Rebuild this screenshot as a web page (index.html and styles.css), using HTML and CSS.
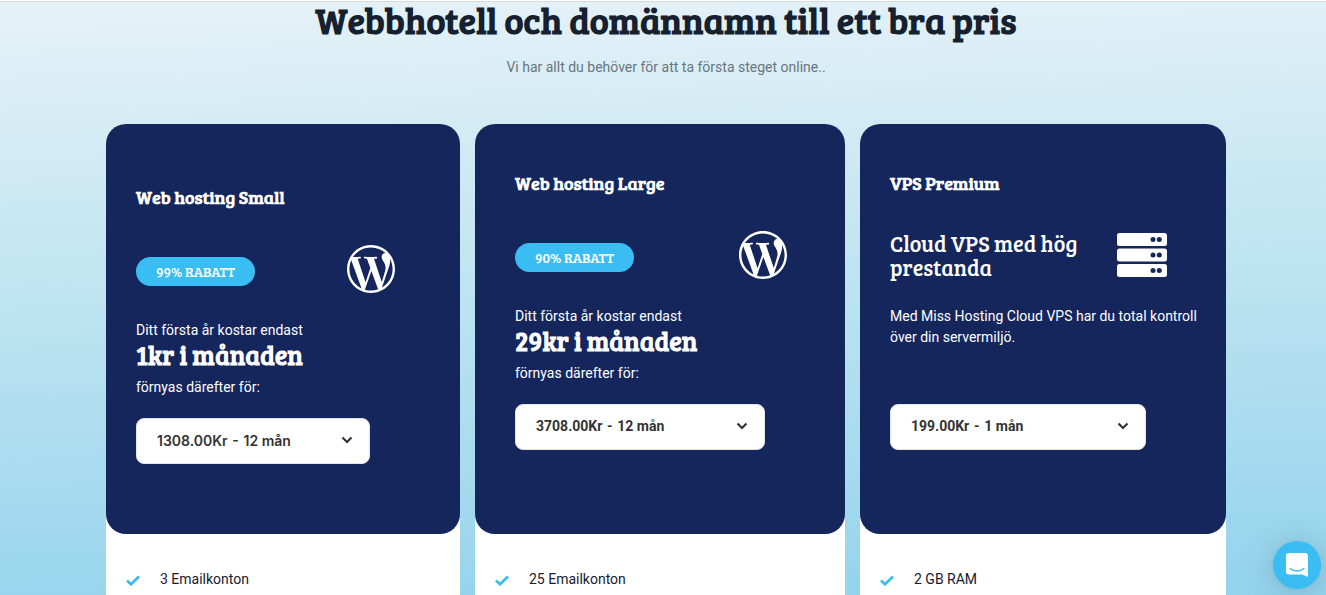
FILE: index.html
```html
<!doctype html>
<html lang="sv">
  <head>
    <meta charset="utf-8">
    <meta name="viewport" content="width=device-width, initial-scale=1.0">
    <title>Webbhotell och domännamn</title>
    <link rel="stylesheet" href="styles.css">
  </head>
  <body>
    <!-- shared icons -->
    <svg class="sprite" aria-hidden="true">
      <symbol id="wordpress" viewBox="0 0 24 24">
        <path d="M21.469 6.825c.84 1.537 1.318 3.3 1.318 5.175 0 3.979-2.156 7.456-5.363 9.325l3.295-9.527c.615-1.54.82-2.771.82-3.864 0-.405-.026-.78-.07-1.11m-7.981.105c.647-.03 1.232-.105 1.232-.105.582-.075.514-.93-.067-.899 0 0-1.755.135-2.88.135-1.064 0-2.85-.15-2.85-.15-.585-.03-.661.855-.075.885 0 0 .54.061 1.125.09l1.68 4.605-2.37 7.08L5.354 6.9c.649-.03 1.234-.1 1.234-.1.585-.075.516-.93-.065-.896 0 0-1.746.138-2.874.138-.2 0-.438-.008-.69-.015C4.911 3.15 8.235 1.215 12 1.215c2.809 0 5.365 1.072 7.286 2.833-.046-.003-.091-.009-.141-.009-1.06 0-1.812.923-1.812 1.914 0 .89.513 1.643 1.06 2.531.411.72.89 1.643.89 2.977 0 .915-.354 1.994-.821 3.479l-1.075 3.585-3.9-11.61.001.014zM12 22.784c-1.059 0-2.081-.153-3.048-.437l3.237-9.406 3.315 9.087c.024.053.05.101.078.149-1.12.393-2.325.609-3.582.609M1.211 12c0-1.564.336-3.05.935-4.39L7.29 21.709C3.694 19.96 1.212 16.271 1.211 12M12 0C5.385 0 0 5.385 0 12s5.385 12 12 12 12-5.385 12-12S18.615 0 12 0"/>
      </symbol>
      <symbol id="chevron" viewBox="0 0 12 8">
        <path d="M1.5 1.5 6 6l4.500-4.500" fill="none" stroke="#333" stroke-width="2.200"/>
      </symbol>
      <symbol id="check" viewBox="0 0 14 12">
        <path d="M1 6.500 5 10.200 13 2.500" fill="none" stroke="#39bdf2" stroke-width="2.800"/>
      </symbol>
    </svg>

    <main class="pricing">
      <header class="intro">
        <h1>Webbhotell och domännamn till ett bra pris</h1>
        <p>Vi har allt du behöver för att ta första steget online..</p>
      </header>

      <div class="cards">

        <article class="card card-small">
          <div class="card-head">
            <h2>Web hosting Small</h2>
            <div class="offer">
              <span class="badge">99% RABATT</span>
              <svg class="icon"><use href="#wordpress"/></svg>
            </div>
            <div class="details">
              <p>Ditt första år kostar endast</p>
              <p class="price">1kr i månaden</p>
              <p>förnyas därefter för:</p>
            </div>
            <div class="period">
              <select aria-label="Period för Web hosting Small">
                <option>1308.00Kr&emsp13;-&emsp13;12 mån</option>
              </select>
              <svg class="chevron"><use href="#chevron"/></svg>
            </div>
          </div>
          <ul class="features">
            <li><svg class="check"><use href="#check"/></svg>3 Emailkonton</li>
          </ul>
        </article>

        <article class="card card-large">
          <div class="card-head">
            <h2>Web hosting Large</h2>
            <div class="offer">
              <span class="badge">90% RABATT</span>
              <svg class="icon"><use href="#wordpress"/></svg>
            </div>
            <div class="details">
              <p>Ditt första år kostar endast</p>
              <p class="price">29kr i månaden</p>
              <p>förnyas därefter för:</p>
            </div>
            <div class="period">
              <select aria-label="Period för Web hosting Large">
                <option>3708.00Kr&emsp13;-&emsp13;12 mån</option>
              </select>
              <svg class="chevron"><use href="#chevron"/></svg>
            </div>
          </div>
          <ul class="features">
            <li><svg class="check"><use href="#check"/></svg>25 Emailkonton</li>
          </ul>
        </article>

        <article class="card card-vps">
          <div class="card-head">
            <h2>VPS Premium</h2>
            <div class="offer">
              <h3>Cloud VPS med hög prestanda</h3>
              <svg class="server" viewBox="0 0 50 44">
                <g fill="#fff">
                  <rect width="50" height="13" rx="2.500"/>
                  <rect y="15.500" width="50" height="13" rx="2.500"/>
                  <rect y="31" width="50" height="13" rx="2.500"/>
                </g>
                <g fill="#14265c">
                  <circle cx="36" cy="6.500" r="2.500"/><circle cx="42.300" cy="6.500" r="2.500"/>
                  <circle cx="36" cy="22" r="2.500"/><circle cx="42.300" cy="22" r="2.500"/>
                  <circle cx="36" cy="37.500" r="2.500"/><circle cx="42.300" cy="37.500" r="2.500"/>
                </g>
              </svg>
            </div>
            <div class="details">
              <p>Med Miss Hosting Cloud VPS har du total kontroll över din servermiljö.</p>
            </div>
            <div class="period">
              <select aria-label="Period för VPS Premium">
                <option>199.00Kr&emsp13;-&emsp13;1 mån</option>
              </select>
              <svg class="chevron"><use href="#chevron"/></svg>
            </div>
          </div>
          <ul class="features">
            <li><svg class="check"><use href="#check"/></svg>2 GB RAM</li>
          </ul>
        </article>

      </div>
    </main>

    <button class="chat" type="button" aria-label="Öppna chatten">
      <svg width="22" height="24" viewBox="0 0 22 24">
        <path d="M3 0h16a3 3 0 0 1 3 3v21l-6-2.500H3a3 3 0 0 1-3-3V3a3 3 0 0 1 3-3z" fill="#fff"/>
        <path d="M4 15.500c4 3.300 10 3.300 14 0" fill="none" stroke="#39bdf2" stroke-width="1.300" stroke-linecap="round"/>
      </svg>
    </button>
  </body>
</html>
```
FILE: styles.css
```css
* {
  box-sizing: border-box;
}
body {
  margin: 0;
  background-color: white;
  font-family: Roboto, sans-serif;
  font-size: 14px;
  line-height: 21px;
}
h1, h2, h3, p, ul {
  margin: 0;
  padding: 0;
}
h1, h2, h3, .badge, .price {
  font-family: "Bree Serif", "Liberation Serif", serif;
}
.sprite {
  display: none;
}

.pricing {
  display: flex;
  flex-direction: column;
  min-height: calc(100vh - 1px);
  margin-top: 1px;
  padding: 0 100px 0 106px;
  border-top: 1px solid #d5dade;
  background: linear-gradient(178deg, #e6f2f8 0%, #c4e6f2 40%, #93d3ec 100%);
}

.intro {
  padding-bottom: 46px;
  color: #6a7580;
  text-align: center;
}
.intro h1 {
  margin-bottom: 19px;
  color: #16202e;
  font-size: 36px;
  line-height: 36px;
}

.cards {
  display: grid;
  flex: 1;
  grid-template-columns: 354fr 370fr 366fr;
  grid-gap: 15px;
}
.card {
  border-radius: 20px 20px 0 0;
  background-color: white;
}
.card-head {
  min-height: 410px;
  padding: 48px 30px;
  border-radius: 20px;
  background-color: #14265c;
  color: white;
}
.card-small .card-head {
  padding-top: 62px;
}
.card-large .card-head {
  padding-left: 40px;
  padding-right: 40px;
}
.card-vps .card-head {
  padding-right: 20px;
}
.card h2 {
  margin-bottom: 37px;
  font-size: 18px;
  line-height: 22px;
}
.card h3 {
  font-size: 22px;
  font-weight: normal;
  line-height: 24px;
}

.offer {
  display: flex;
  align-items: center;
  justify-content: space-between;
  height: 48px;
  margin-bottom: 27px;
  padding-right: 39px;
}
.card-small .offer {
  padding-right: 35px;
}
.card-large .offer {
  padding-right: 18px;
}
.badge {
  margin-top: 5px;
  padding: 4px 20px;
  border-radius: 15px;
  background-color: #39bdf2;
}
.icon {
  width: 48px;
  height: 48px;
  fill: white;
}
.server {
  flex: none;
  width: 50px;
  height: 44px;
}

.details {
  min-height: 78px;
  margin-bottom: 20px;
}
.price {
  margin-bottom: 8px;
  font-size: 26px;
  font-weight: bold;
  line-height: 28px;
}

.period {
  position: relative;
  width: 256px;
  max-width: 100%;
}
.card-small .period {
  width: 234px;
}
.card-large .period {
  width: 250px;
}
.period select {
  display: block;
  width: 100%;
  height: 46px;
  padding: 0 20px 2px;
  border: 1px solid #e5e5e5;
  border-radius: 8px;
  appearance: none;
  background-color: white;
  color: #333;
  font: bold 14px Roboto, sans-serif;
}
.card-small select {
  font-family: Inter, sans-serif;
  font-weight: 600;
}
.chevron {
  position: absolute;
  top: 18px;
  right: 17px;
  width: 12px;
  height: 8px;
  pointer-events: none;
}

.features {
  padding: 35px 20px 0;
  list-style: none;
}
.features li {
  display: flex;
  align-items: center;
  color: #16202e;
}
.check {
  width: 14px;
  height: 12px;
  margin-right: 20px;
}

.chat {
  display: flex;
  align-items: center;
  justify-content: center;
  position: fixed;
  right: 5px;
  bottom: 6px;
  width: 48px;
  height: 48px;
  border: 0;
  border-radius: 50%;
  background-color: #39bdf2;
  box-shadow: 0 1px 6px rgba(0,0,0,0.06), 0 2px 32px rgba(0,0,0,0.16);
}
```
